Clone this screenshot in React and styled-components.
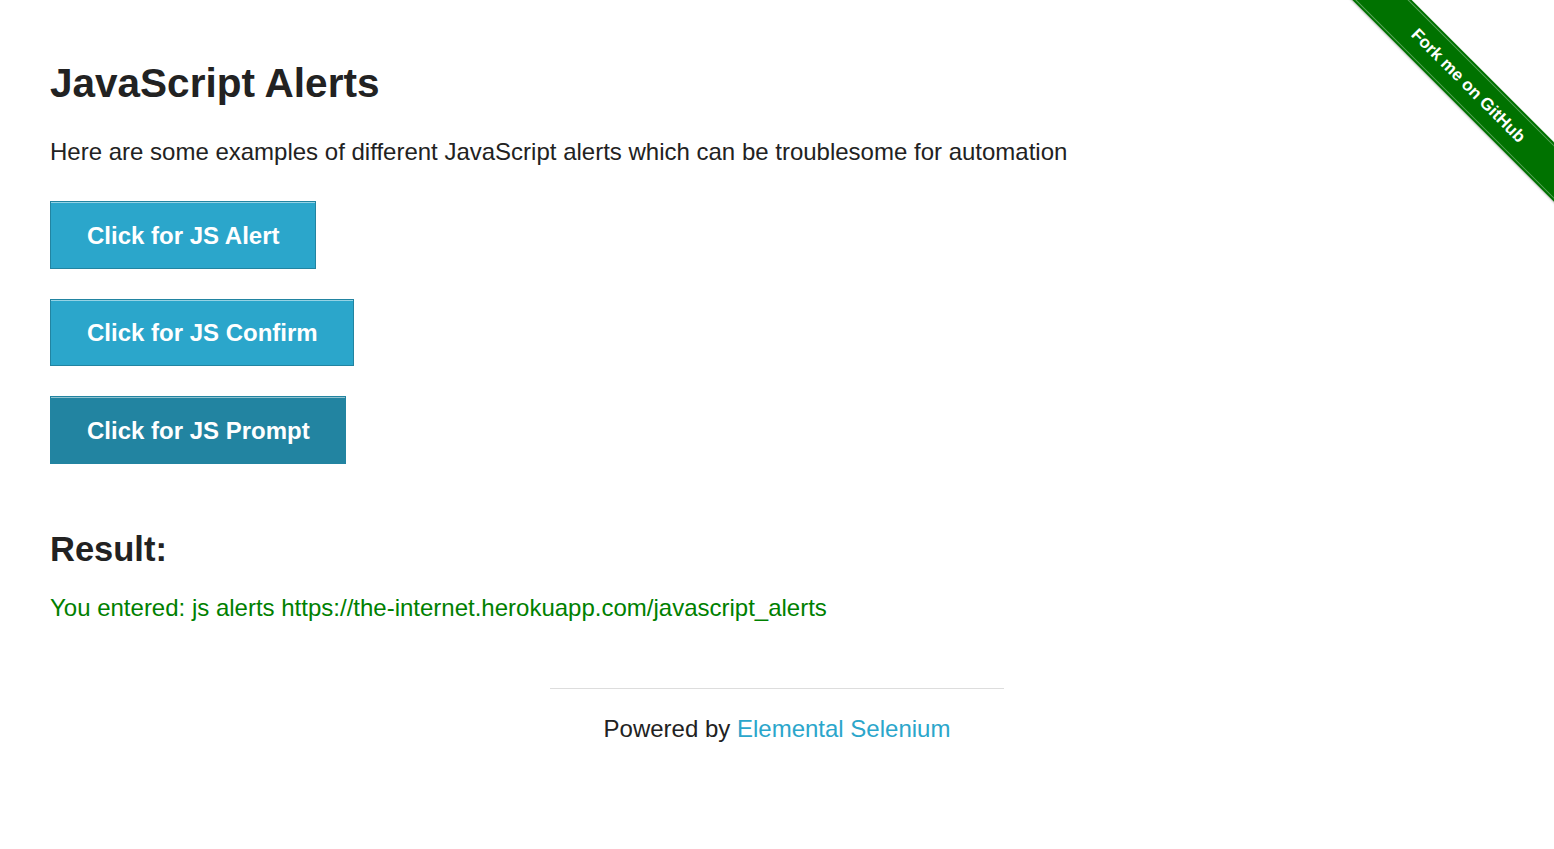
import React from "react";
import styled, { createGlobalStyle } from "styled-components";

const GlobalStyle = createGlobalStyle`
  html, body {
    margin: 0;
    padding: 0;
    background: #fff;
  }
  body {
    font-family: "Liberation Sans", Arial, Helvetica, sans-serif;
    color: #222;
  }
`;

const Page = styled.div`
  position: relative;
  min-height: 849px;
  overflow: hidden;
`;

const Content = styled.div`
  padding: 1px 50px 0;
`;

const Title = styled.h3`
  font-size: 40.5px;
  line-height: 1.25;
  font-weight: bold;
  margin: 57px 0 24px;
`;

const Text = styled.p`
  font-size: 24px;
  line-height: 1.6;
  margin: 0;
  color: ${(props) => props.color || "#222"};
`;

const ButtonList = styled.ul`
  list-style: none;
  margin: 30px 0 0;
  padding: 0;
  display: flex;
  flex-direction: column;
  align-items: flex-start;
  gap: 30px;
`;

const Button = styled.button`
  font-family: "Liberation Sans", Arial, Helvetica, sans-serif;
  font-size: 24px;
  font-weight: bold;
  line-height: 28px;
  color: #fff;
  background-color: ${(props) => (props.active ? "#2284a1" : "#2ba6cb")};
  border: 1px solid #2284a1;
  box-shadow: inset 0 1px 0 rgba(255, 255, 255, 0.5);
  padding: 19.75px 35px 17.75px 36px;
  margin: 0;
  cursor: pointer;
`;

const ResultTitle = styled.h4`
  font-size: 34.5px;
  line-height: 1.25;
  font-weight: bold;
  margin: 64px 0 18px;
`;

const Footer = styled.div`
  display: flex;
  flex-direction: column;
  align-items: center;
  margin-top: 61px;
`;

const Rule = styled.hr`
  width: 454px;
  border: 0;
  border-top: 1px solid #ddd;
  margin: 0 0 21px;
`;

const Link = styled.a`
  color: #2ba6cb;
  text-decoration: none;
`;

const Ribbon = styled.a`
  position: absolute;
  top: 0;
  right: 0;
  width: 224px;
  height: 224px;
  overflow: hidden;
  text-decoration: none;
`;

const Band = styled.div`
  position: absolute;
  left: -32px;
  top: 65px;
  width: 340px;
  height: 42px;
  background: #007200;
  transform: rotate(45deg);
  display: flex;
  align-items: center;
  justify-content: center;
  color: #fff;
  font-family: "Liberation Sans", Arial, sans-serif;
  font-weight: bold;
  font-size: 17px;
  box-shadow: 0 1px 2px rgba(0, 0, 0, 0.25);

  &::before,
  &::after {
    content: "";
    position: absolute;
    left: 0;
    right: 0;
    height: 1px;
    background: rgba(255, 255, 255, 0.35);
  }
  &::before {
    top: 2px;
  }
  &::after {
    bottom: 2px;
  }
`;

export default function App() {
  return (
    <Page>
      <GlobalStyle />
      <Content>
        <Title>JavaScript Alerts</Title>
        <Text>
          Here are some examples of different JavaScript alerts which can be
          troublesome for automation
        </Text>
        <ButtonList>
          <li>
            <Button>Click for JS Alert</Button>
          </li>
          <li>
            <Button>Click for JS Confirm</Button>
          </li>
          <li>
            <Button active>Click for JS Prompt</Button>
          </li>
        </ButtonList>
        <ResultTitle>Result:</ResultTitle>
        <Text color="green">
          You entered: js alerts https://the-internet.herokuapp.com/javascript_alerts
        </Text>
      </Content>
      <Footer>
        <Rule />
        <Text>
          Powered by <Link href="#">Elemental Selenium</Link>
        </Text>
      </Footer>
      <Ribbon href="#">
        <Band>Fork me on GitHub</Band>
      </Ribbon>
    </Page>
  );
}
